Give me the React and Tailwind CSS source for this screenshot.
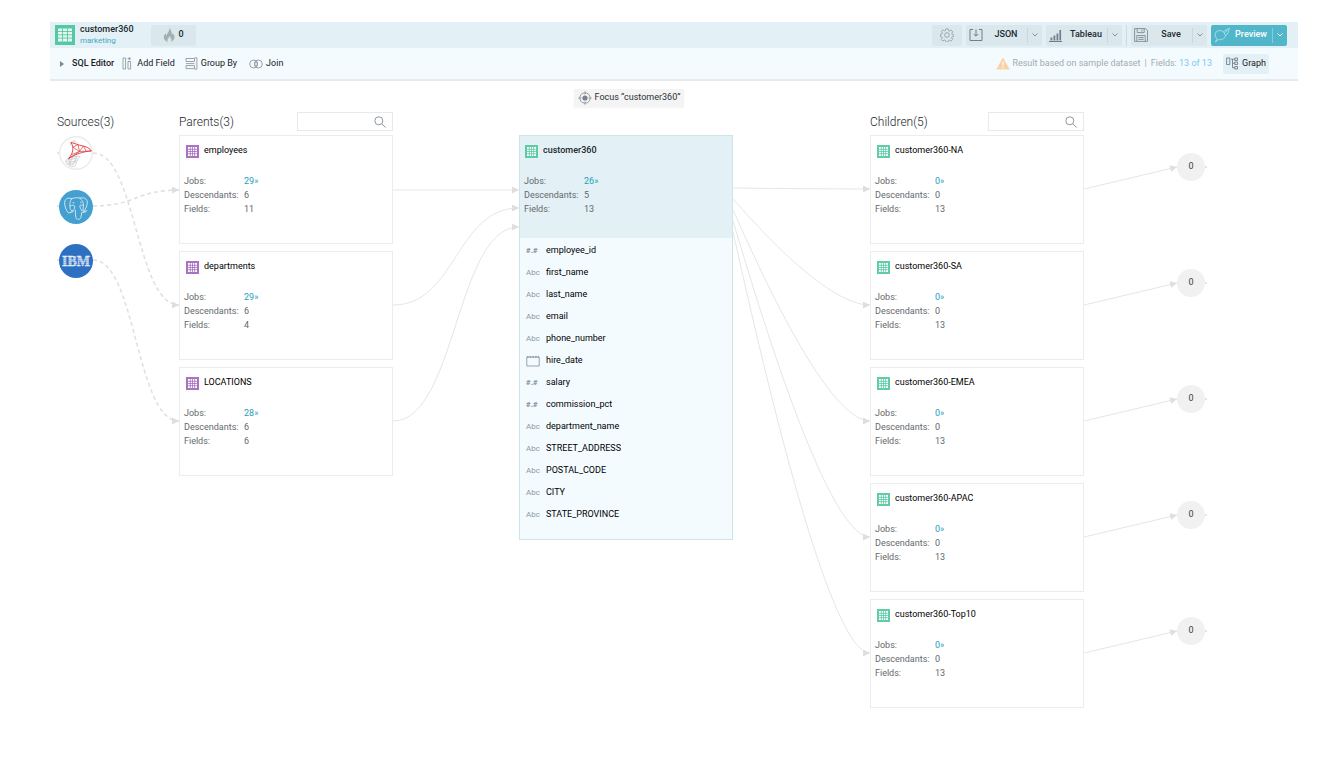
import React, { useState } from "react";

const parents = [
  { name: "employees", jobs: 29, descendants: 6, fields: 11 },
  { name: "departments", jobs: 29, descendants: 6, fields: 4 },
  { name: "LOCATIONS", jobs: 28, descendants: 6, fields: 6 },
];

const children = [
  { name: "customer360-NA", jobs: 0, descendants: 0, fields: 13 },
  { name: "customer360-SA", jobs: 0, descendants: 0, fields: 13 },
  { name: "customer360-EMEA", jobs: 0, descendants: 0, fields: 13 },
  { name: "customer360-APAC", jobs: 0, descendants: 0, fields: 13 },
  { name: "customer360-Top10", jobs: 0, descendants: 0, fields: 13 },
];

const columns = [
  { name: "employee_id", type: "number" },
  { name: "first_name", type: "text" },
  { name: "last_name", type: "text" },
  { name: "email", type: "text" },
  { name: "phone_number", type: "text" },
  { name: "hire_date", type: "date" },
  { name: "salary", type: "number" },
  { name: "commission_pct", type: "number" },
  { name: "department_name", type: "text" },
  { name: "STREET_ADDRESS", type: "text" },
  { name: "POSTAL_CODE", type: "text" },
  { name: "CITY", type: "text" },
  { name: "STATE_PROVINCE", type: "text" },
];

// --- Graph edges: [x1, y1, x2, y2] in canvas space ---
const sourceEdges = [
  [43, 71, 129, 223],
  [43, 124, 129, 108],
  [43, 178, 129, 339],
];

const parentEdges = [
  [343, 108, 469, 108],
  [343, 223, 469, 126],
  [343, 339, 469, 145],
];

const childEdges = [
  [683, 106, 820, 107],
  [683, 117, 820, 223],
  [683, 128, 820, 339],
  [683, 139, 820, 455],
  [683, 150, 820, 571],
];

const leafEdges = [
  [1034, 107, 1127, 85],
  [1034, 223, 1127, 201],
  [1034, 339, 1127, 317],
  [1034, 455, 1127, 433],
  [1034, 571, 1127, 549],
];

const curve = ([x1, y1, x2, y2]) => {
  const mid = (x1 + x2) / 2;
  return `M${x1} ${y1}C${mid} ${y1} ${mid} ${y2} ${x2} ${y2}`;
};

// Fans out steeply from the focus node, flattens at the child
const fan = ([x1, y1, x2, y2]) => {
  const dx = x2 - x1;
  const dy = y2 - y1;
  return `M${x1} ${y1}C${x1 + dx * 0.12} ${y1 + dy * 0.17} ${x1 + dx * 0.67} ${y2} ${x2} ${y2}`;
};

// --- Icons ---
function GridIcon({ className }) {
  return (
    <svg viewBox="0 0 13 13" className={className} aria-hidden="true">
      <rect width="13" height="13" fill="currentColor" opacity="0.85" />
      <rect x="2" y="2" width="9" height="9" fill="#fff" />
      <path d="M2 4.300h9M2 6.500h9M2 8.700h9M4.300 2v9M6.500 2v9M8.700 2v9" stroke="currentColor" strokeWidth="0.7" />
    </svg>
  );
}

function DatasetIcon() {
  return (
    <svg viewBox="0 0 20 20" className="h-5 w-5 shrink-0" aria-hidden="true">
      <rect width="20" height="20" fill="#55c8a3" />
      <rect x="3" y="3.5" width="14" height="13" fill="#e6f8f1" />
      <path d="M3 6.500h14M3 9.800h14M3 13.100h14M7.500 3.500v13M12.500 3.500v13" stroke="#55c8a3" strokeWidth="0.9" />
    </svg>
  );
}

function FlameIcon() {
  return (
    <svg viewBox="0 0 12 14" className="h-3.5 w-3" aria-hidden="true">
      <path
        d="M6 0c.8 2.300-.4 3.600-1.400 5C4 5.900 3.800 6.600 4 7.500 3.200 7.200 2.700 6.300 2.800 5.300 1.300 6.500.6 7.800.8 9.500c.2 2 1.700 3.600 4 4.400-.7-1.400-.3-2.700.7-3.900.5-.7.7-1.200.7-2 1.300.9 1.700 2.200 1.300 3.600.5-.2.8-.6 1-1 .2 1.200 0 2.200-.8 3.300C10 12.900 11.500 11.400 11.500 9.200c0-1.700-.8-2.900-1.800-4 0 .8-.3 1.500-.8 1.900C9 4.300 8.200 1.700 6 0z"
        fill="#a4aeb3"
      />
    </svg>
  );
}

function AddFieldIcon() {
  return (
    <svg viewBox="0 0 11 13" className="h-[13px] w-[11px]" fill="none" stroke="#8f989f" strokeWidth="0.9" aria-hidden="true">
      <path d="M1 1h2.600v11H1zM6 4.500h2.600V12H6zM7.300 0v3.400M5.600 1.700H9" />
    </svg>
  );
}

function GroupByIcon() {
  return (
    <svg viewBox="0 0 13 13" className="h-[13px] w-[13px]" fill="none" stroke="#8f989f" strokeWidth="0.9" aria-hidden="true">
      <path d="M1 1.500h8.500v3H1zM1 6.600h8.500M1 8.600h8.500v3H1zM9.500 .8h2.400v11.400H9.500" />
    </svg>
  );
}

function JoinIcon() {
  return (
    <svg viewBox="0 0 14 10" className="h-2.5 w-3.5" fill="none" stroke="#8f989f" strokeWidth="0.9" aria-hidden="true">
      <circle cx="4.700" cy="5" r="4" />
      <circle cx="9.300" cy="5" r="4" />
      <ellipse cx="7" cy="5" rx="1.200" ry="2.600" />
    </svg>
  );
}

function GearIcon() {
  return (
    <svg viewBox="0 0 24 24" className="h-3.5 w-3.5" fill="none" stroke="#8d9aa3" strokeWidth="1.400" aria-hidden="true">
      <path d="M10 1.500h4l.6 3 2 .9 2.600-1.700 2.600 2.700-1.600 2.600.9 2 2.400.5v3l-2.700.7-.8 2 1.700 2.600-2.700 2.600-2.500-1.600-2 .9-.6 2.500h-3.700l-.7-2.700-2-.8-2.600 1.600-2.600-2.600 1.600-2.600-.9-2-2.600-.6v-3.500l2.800-.6.8-2L2.300 5.900 5 3.300l2.500 1.600 2-.8z" />
      <circle cx="12" cy="12" r="4" />
    </svg>
  );
}

function ExportIcon() {
  return (
    <svg viewBox="0 0 14 14" className="h-3.5 w-3.5" fill="none" stroke="#6f7e89" aria-hidden="true">
      <path d="M4 1.500H1v11h12v-11h-3M7 1.500V8M4.800 6L7 8.200 9.200 6" />
    </svg>
  );
}

function BarsIcon() {
  return (
    <svg viewBox="0 0 13 13" className="h-[13px] w-[13px]" fill="#6f7e89" aria-hidden="true">
      <path d="M0 12h13v.9H0zM1.500 8.500h1.800v3H1.500zM4.500 6.500h1.800v5H4.500zM7.500 4.500h1.800v7H7.500zM10.400 1h1.700v10.500h-1.700z" />
    </svg>
  );
}

function FloppyIcon() {
  return (
    <svg viewBox="0 0 14 14" className="h-3.5 w-3.5" fill="none" stroke="#7d8b94" strokeWidth="0.9" aria-hidden="true">
      <path d="M.6.6h10.900l2 2v10.800H.6zM3.200.6v4h7v-4M7.900 1.500v2M2.800 13.400V7.500h8.400v5.900M4.300 9.500h5.400M4.300 11.400h5.400" />
    </svg>
  );
}

function PreviewIcon() {
  return (
    <svg viewBox="0 0 16 16" className="h-4 w-4" fill="none" stroke="#b9e4ec" strokeWidth="0.8" aria-hidden="true">
      <path d="M15.300 1.200C13.500 3 11.200 2.700 9.500 4.700 7 3 3.500 3.200 2 5.200c-1.500 2.200-.8 5 1 6.300L1.500 15l3-2.500c3 .6 6-.5 7-4 2-.8 3.200-3.500 3.800-7.300zM9.500 4.700l2 3.800M10.500 5.800l3.300-3" />
    </svg>
  );
}

function GraphIcon() {
  return (
    <svg viewBox="0 0 13 13" className="h-[13px] w-[13px]" fill="none" stroke="#6f7e89" strokeWidth="0.9" aria-hidden="true">
      <path d="M.6 1h3.200v6.500H.6zM8.800 1h2.700v2.500H8.800zM8.800 5h2.700v2.500H8.800zM8.800 9.500h2.700V12H8.800zM5 2.200h3.800M6.500 2.200v8.500h2.300M6.500 6.200h2.300" />
    </svg>
  );
}

function WarningIcon() {
  return (
    <svg viewBox="0 0 14 13" className="h-[13px] w-3.5" aria-hidden="true">
      <path d="M7 .5l6.800 12H.2z" fill="#fbd2a8" />
      <path d="M7 4.500v4M7 9.800v1.400" stroke="#fff" strokeWidth="1.200" />
    </svg>
  );
}

function FocusIcon() {
  return (
    <svg viewBox="0 0 14 14" className="h-3.5 w-3.5" fill="none" stroke="#8e959e" strokeWidth="0.9" aria-hidden="true">
      <circle cx="7" cy="7" r="5.200" />
      <circle cx="7" cy="7" r="2.600" fill="#7b828d" stroke="none" />
      <path d="M7 .3v3.200M7 10.500v3.200M.3 7h3.200M10.500 7h3.200" />
    </svg>
  );
}

function Chevron({ className }) {
  return (
    <svg viewBox="0 0 6 4" className={`h-1 w-1.5 ${className}`} fill="none" stroke="currentColor" strokeWidth="0.9" aria-hidden="true">
      <path d="M.5.5L3 3 5.500.5" />
    </svg>
  );
}

function CalendarIcon() {
  return (
    <svg viewBox="0 0 14 12" className="h-3 w-3.5" fill="none" stroke="#97a3ac" aria-hidden="true">
      <path d="M.8 2h12.400v9H.8z" />
      <path d="M1 2h12" strokeWidth="1.800" strokeDasharray="1.500 1.200" />
    </svg>
  );
}

// --- Source logos ---
function SqlServerLogo() {
  return (
    <svg viewBox="0 0 34 34" className="h-[34px] w-[34px]" fill="none" aria-hidden="true">
      <circle cx="17" cy="17" r="16.300" fill="#fff" stroke="#ebebeb" strokeWidth="1.400" />
      <g stroke="#bcbcbc" strokeWidth="0.6">
        <path d="M9.500 22c3-1.800 9.500-1 11.500-1.800-2.800 2.400-3 5.800-4.600 9.400-2.500 1.900-5.900 1.400-7.100-.8-1.600-1-3-2-2.400-4 .5-1.200 1.500-2.200 2.600-2.800z" />
        <path d="M7 25c3 1.500 8.500 1.200 11.500-1.500M8 27.500c3 1 6.500.5 9-2M9.500 22l2.500 8M14 20.800l-4 8.200M17.500 20.600l-4 9.400M9 24l9-2" />
        <path d="M11 7l4.500-2.500 3 2.800M11 7l.8 2.500M15.500 4.500l-1 3.500" />
      </g>
      <g stroke="#e0383c" strokeWidth="0.9" strokeLinejoin="round">
        <path d="M12 6.500c4.500 1 7 2.500 11 3.300 4 .8 8 2.300 9.300 5.200-7 .3-15.500 2.800-22.800 7.700C13.800 18 15.500 12 12 6.500z" />
        <path d="M13.800 11l6.700 4.500 11.800-.5M9.500 22.700l11-7.200M20.500 15.500L19 8.600M14 11l5-2.400M20.500 15.500l4-5.500M12.800 18.500l7.700-3M24.500 10l2.500 5" strokeWidth="0.7" />
      </g>
    </svg>
  );
}

function PostgresLogo() {
  return (
    <svg viewBox="0 0 34 34" className="h-[34px] w-[34px]" fill="none" aria-hidden="true">
      <circle cx="17" cy="17" r="17" fill="#459fcf" />
      <g stroke="#d5ecf7" strokeWidth="0.9" strokeLinecap="round" strokeLinejoin="round">
        <path d="M12.700 8.700C9.700 7.500 6.200 8 5.700 12c-.4 3.800 1.600 8.600 3.400 10.600 1.200 1.300 2.600-.3 3.700-1.700" />
        <path d="M12.700 8.700c-2 2.200-2 5.500-1.700 8-.3 2.400.8 4 3 4.300" />
        <path d="M12.700 8.700c2.600-1.200 5.200-1.200 8-.6 4-1 7.300.4 7.600 3.900.2 3.400-1.400 6.800-3.800 9.300" />
        <path d="M20.700 8.100c2.800 1.700 4 4.600 3.700 7.400-.3 2-.2 3.600-.4 5.300 1.500.7 3 .2 3.800-.3-.8 1.600-3.200 2.300-5 1.700-.4 1.800-.6 3.900-1 5.500-.7 2.100-4.300 2.200-4.900 0-.6-2.400-.4-5-.5-7.400" />
        <path d="M11.100 16c2-1 4-.9 4.500.1.500 1.300-.6 3-1.200 4.600-.4 1-1.200 1.600-2.500 1.800M24.400 15.500c-1.300-.7-3-.8-3.500.2-.4 1.500 1.200 3.300 1.800 4.900" />
        <path d="M14 12.800h1M21.500 12.300h.8" />
      </g>
    </svg>
  );
}

function IbmLogo() {
  return (
    <svg viewBox="0 0 34 34" className="h-[34px] w-[34px]" aria-hidden="true">
      <circle cx="17" cy="17" r="17" fill="#2d6fc1" />
      <text x="17" y="22" textAnchor="middle" fontFamily="'Liberation Serif', serif" fontWeight="700" fontSize="14" fill="#e3edf8" stroke="#e3edf8" strokeWidth="0.5">
        IBM
      </text>
      <path d="M2 14.200h30M2 16.200h30M2 18.200h30M2 20.200h30" stroke="#2d6fc1" strokeWidth="0.5" />
    </svg>
  );
}

const sources = [
  { name: "SQL Server", Logo: SqlServerLogo },
  { name: "PostgreSQL", Logo: PostgresLogo },
  { name: "IBM", Logo: IbmLogo },
];

// --- Header ---
function SplitButton({ icon, label, primary }) {
  const tone = primary ? "bg-[#51b6c9] text-white" : "bg-[#dae8ee] text-[#22282c]";
  return (
    <div className={`flex h-[21px] w-[76px] rounded-xs ${tone}`}>
      <button className="flex flex-1 items-center pl-[3px] text-[9px] font-medium">
        <span className="w-4">{icon}</span>
        <span className="flex-1 text-center">{label}</span>
      </button>
      <button
        aria-label={`${label} options`}
        className={`my-[3px] flex w-[15px] items-center justify-center border-l ${primary ? "border-[#85cedb]" : "border-[#c9d8df]"}`}
      >
        <Chevron className={primary ? "text-white" : "text-[#7c8b94]"} />
      </button>
    </div>
  );
}

function Header() {
  return (
    <header className="flex h-[26px] items-center bg-[#e3f0f6] pl-[5px] pr-[11px]">
      <DatasetIcon />
      <div className="ml-[5px] w-[71px]">
        <h1 className="text-[9px] leading-[11px] font-medium text-[#22282c]">customer360</h1>
        <p className="text-[8px] leading-[11px] text-[#3fa9bf]">marketing</p>
      </div>
      <button className="flex h-[21px] w-[45px] items-center justify-center gap-[3px] rounded-xs bg-[#dae8ee] text-[9px] font-medium text-[#22282c]">
        <FlameIcon />0
      </button>

      <div className="ml-auto flex items-center gap-1">
        <button aria-label="Settings" className="flex h-[21px] w-[30px] items-center justify-center rounded-xs bg-[#dae8ee]">
          <GearIcon />
        </button>
        <SplitButton icon={<ExportIcon />} label="JSON" />
        <SplitButton icon={<BarsIcon />} label="Tableau" />
        <div className="h-[21px] w-px bg-[#cbd9e0]" />
        <SplitButton icon={<FloppyIcon />} label="Save" />
        <SplitButton icon={<PreviewIcon />} label="Preview" primary />
      </div>
    </header>
  );
}

function Toolbar() {
  return (
    <div className="flex h-[33px] items-center border-b-2 border-[#e6eaec] bg-[#f3fbff] pl-[10px] pr-[29px] text-[9px] text-[#1b2023]">
      <button className="flex items-center gap-2 font-medium">
        <svg viewBox="0 0 4 6" className="h-1.5 w-1" fill="#7c868d" aria-hidden="true">
          <path d="M0 0l4 3-4 3z" />
        </svg>
        SQL Editor
      </button>
      <button className="ml-2 flex items-center gap-1">
        <AddFieldIcon />
        Add Field
      </button>
      <button className="ml-2.5 flex items-center gap-[3px]">
        <GroupByIcon />
        Group By
      </button>
      <button className="ml-3 flex items-center gap-[3px]">
        <JoinIcon />
        Join
      </button>

      <div className="ml-auto flex items-center text-[#a3abb0]">
        <WarningIcon />
        <span className="ml-0.5">Result based on sample dataset</span>
        <span className="mx-1">|</span>
        <span>
          Fields: <span className="text-[#80c8ee]">13 of 13</span>
        </span>
      </div>
      <button className="ml-[11px] flex h-5 w-[46px] items-center justify-center gap-[3px] rounded-xs bg-[#e3f0f6]">
        <GraphIcon />
        Graph
      </button>
    </div>
  );
}

// --- Graph nodes ---
function Stats({ jobs, descendants, fields }) {
  return (
    <dl className="grid grid-cols-[60px_1fr] text-[9px] leading-[14px] text-[#63686c]">
      <dt>Jobs:</dt>
      <dd>
        <a href="#jobs" className="text-[#1fa0b9]">{jobs}»</a>
      </dd>
      <dt>Descendants:</dt>
      <dd>{descendants}</dd>
      <dt>Fields:</dt>
      <dd>{fields}</dd>
    </dl>
  );
}

function NodeCard({ node, iconClass }) {
  return (
    <article className="h-[109px] border border-[#ececec] bg-white pt-2 pl-1">
      <div className="mb-[16px] flex h-[14px] items-center gap-[5px] pl-0.5">
        <GridIcon className={`h-[13px] w-[13px] ${iconClass}`} />
        <h3 className="text-[9px] text-black">{node.name}</h3>
      </div>
      <Stats {...node} />
    </article>
  );
}

function NodeColumn({ title, nodes, iconClass }) {
  const [query, setQuery] = useState("");
  const shown = nodes.filter((n) => n.name.toLowerCase().includes(query.toLowerCase()));

  return (
    <section className="w-[214px] shrink-0 pt-[31px]">
      <div className="mb-1 flex h-[19px] items-center justify-between">
        <h2 className="text-[12px] font-light text-[#22282c]">
          {title}({nodes.length})
        </h2>
        <label className="flex h-[19px] w-24 items-center border border-[#e9e9e9] bg-white pr-1.5">
          <input
            aria-label={`Search ${title}`}
            value={query}
            onChange={(e) => setQuery(e.target.value)}
            className="min-w-0 flex-1 px-1 text-[9px] outline-none"
          />
          <svg viewBox="0 0 12 12" className="h-3 w-3" fill="none" stroke="#8e979e" aria-hidden="true">
            <circle cx="4.800" cy="4.800" r="4" />
            <path d="M7.800 7.800l3.800 3.700" />
          </svg>
        </label>
      </div>
      <div className="flex flex-col gap-[7px]">
        {shown.map((n) => (
          <NodeCard key={n.name} node={n} iconClass={iconClass} />
        ))}
      </div>
    </section>
  );
}

function TypeIcon({ type }) {
  if (type === "date") return <CalendarIcon />;
  if (type === "number") return <span className="text-[8px] font-black text-[#8c979f]">#.#</span>;
  return <span className="text-[8px] text-[#8c979f]">Abc</span>;
}

function FocusNode() {
  return (
    <section className="w-[214px] shrink-0 pt-2">
      <button className="mb-[28px] ml-[55px] flex h-[18px] w-[110px] items-center justify-center gap-[3px] bg-[#f4f4f4] text-[9px] text-[#2b3034] shadow-xs">
        <FocusIcon />
        Focus “customer360”
      </button>
      <article className="border border-[#cfe3ea] bg-[#f3fbff]">
        <div className="h-[102px] bg-[#e3f0f6] pt-2 pl-1">
          <div className="mb-4 flex h-[14px] items-center gap-[5px] pl-px">
            <GridIcon className="h-[13px] w-[13px] text-[#46c398]" />
            <h3 className="text-[9px] font-medium text-[#22282c]">customer360</h3>
          </div>
          <Stats jobs={26} descendants={5} fields={13} />
        </div>
        <ul className="pt-0.5 pb-[13px]">
          {columns.map((c) => (
            <li key={c.name} className="flex h-[22px] items-center pl-1.5 text-[9px] text-black">
              <span className="flex w-5 items-center">
                <TypeIcon type={c.type} />
              </span>
              {c.name}
            </li>
          ))}
        </ul>
      </article>
    </section>
  );
}

function Edges() {
  return (
    <svg className="pointer-events-none absolute inset-0 h-full w-full" fill="none" stroke="#e6e6e6" aria-hidden="true">
      <defs>
        <marker id="arrow" viewBox="0 0 6 6" refX="6" refY="3" markerWidth="7" markerHeight="7" markerUnits="userSpaceOnUse" orient="auto">
          <path d="M0 0l6 3-6 3z" fill="#dedede" stroke="none" />
        </marker>
      </defs>
      <g transform="translate(0 1)">
        {sourceEdges.map((e) => (
          <g key={e.join()}>
            <path d={curve(e)} stroke="#dfdfdf" strokeWidth="1.500" strokeDasharray="4 3" markerEnd="url(#arrow)" />
            <circle cx="8" cy={e[1]} r="1" fill="#dedede" stroke="none" />
          </g>
        ))}
        {parentEdges.map((e) => (
          <path key={e.join()} d={curve(e)} markerEnd="url(#arrow)" />
        ))}
        {childEdges.map((e) => (
          <path key={e.join()} d={fan(e)} markerEnd="url(#arrow)" />
        ))}
        {leafEdges.map(([x1, y1, x2, y2]) => (
          <g key={y1}>
            <path d={`M${x1} ${y1}L${x2} ${y2}`} markerEnd="url(#arrow)" />
            <circle cx={x2 + 29} cy={y2} r="1" fill="#dedede" stroke="none" />
          </g>
        ))}
      </g>
    </svg>
  );
}

function App() {
  return (
    <div className="min-h-screen bg-white pt-[22px] pr-9 pl-[50px] font-['Roboto',sans-serif]">
      <Header />
      <Toolbar />
      <main className="relative flex overflow-x-auto pb-10 pl-[7px]">
        <Edges />
        <section className="w-[122px] shrink-0 pt-[31px]">
          <h2 className="mb-[5px] flex h-[19px] items-center text-[12px] font-light text-[#22282c]">
            Sources({sources.length})
          </h2>
          <ul className="flex flex-col gap-5 pl-0.5">
            {sources.map(({ name, Logo }) => (
              <li key={name} title={name}>
                <Logo />
              </li>
            ))}
          </ul>
        </section>
        <NodeColumn title="Parents" nodes={parents} iconClass="text-[#9a5bb5]" />
        <div className="w-[126px] shrink-0" />
        <FocusNode />
        <div className="w-[137px] shrink-0" />
        <NodeColumn title="Children" nodes={children} iconClass="text-[#46c398]" />
        <ul className="flex shrink-0 flex-col gap-[88px] pt-[72px] pl-[93px]">
          {children.map((c) => (
            <li key={c.name} className="flex h-7 w-7 items-center justify-center rounded-full bg-[#f1f1f1] text-[9px] text-[#3b4044]">
              {c.descendants}
            </li>
          ))}
        </ul>
      </main>
    </div>
  );
}

export default App;
